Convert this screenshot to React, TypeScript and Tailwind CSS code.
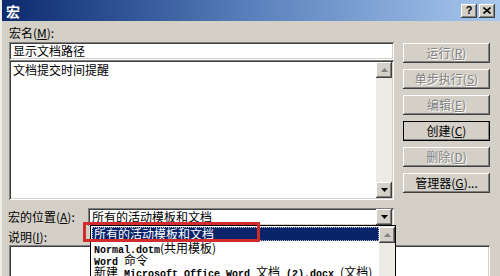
import React from "react"

const raised =
  "bg-[#d4d0c8] shadow-[inset_-1px_-1px_#404040,inset_1px_1px_#ffffff,inset_-2px_-2px_#808080,inset_2px_2px_#d4d0c8]"
const sunken =
  "bg-white shadow-[inset_1px_1px_#808080,inset_-1px_-1px_#ffffff,inset_2px_2px_#404040,inset_-2px_-2px_#d4d0c8]"
const cjk = "font-['Noto_Sans_CJK_SC','Noto_Sans_CJK_JP',sans-serif]"
const mono = "font-['Liberation_Mono','Noto_Sans_CJK_SC',monospace]"
const cjkIn = `${cjk} text-[12px] leading-[12px]`

function Arrow({ up }: { up?: boolean }) {
  return (
    <div className={`${raised} w-[16px] h-[16px] flex items-center justify-center shrink-0`}>
      <svg width="7" height="4" viewBox="0 0 7 4">
        <path d={up ? "M3.5 0 L7 4 L0 4 Z" : "M0 0 L7 0 L3.5 4 Z"} fill={up ? "#808080" : "#000"} />
      </svg>
    </div>
  )
}

function Btn({ label, hot, rest, disabled, def }: { label: string; hot: string; rest?: string; disabled?: boolean; def?: boolean }) {
  return (
    <div
      className={`${raised} h-[20px] w-full flex items-center justify-center text-[12px] leading-none ${
        def ? "outline outline-1 outline-black -outline-offset-1" : ""
      } ${disabled ? "text-[#808080] [text-shadow:1px_1px_0_#ffffff]" : "text-black"}`}
    >
      <span>
        {label}(<span className="underline">{hot}</span>){rest}
      </span>
    </div>
  )
}

export default function App() {
  return (
    <div className={`${cjk} relative w-[500px] h-[276px] overflow-hidden bg-[#d4d0c8] border-l-[2px] border-[#eeece6] text-[12px] text-black`}>
      {/* Title bar */}
      <div className="h-[21px] flex items-center justify-between pl-[4px] pr-[5px] bg-gradient-to-r from-[#0c2a6e] via-[#5a80bc] to-[#a8c8ee]">
        <span className="text-white font-bold text-[14px] leading-none">宏</span>
        <div className="flex gap-[2px]">
          <div className={`${raised} w-[16px] h-[14px] flex items-center justify-center text-[11px] font-bold leading-none font-['Liberation_Sans',sans-serif]`}>?</div>
          <div className={`${raised} w-[16px] h-[14px] flex items-center justify-center`}>
            <svg width="8" height="7" viewBox="0 0 8 7">
              <path d="M0.5 0.5 L7.5 6.5 M7.5 0.5 L0.5 6.5" stroke="#000" strokeWidth="1.6" />
            </svg>
          </div>
        </div>
      </div>

      {/* Main */}
      <div className="flex pl-[7px]">
        <div className="w-[385px] flex flex-col">
          <div className="h-[21px] flex items-center pt-[3px]">
            宏名(<span className="underline">M</span>):
          </div>
          <div className={`${sunken} h-[18px] flex items-center pl-[4px] leading-none`}>显示文档路径</div>
          <div className={`${sunken} h-[140px] flex p-[2px]`}>
            <div className="flex-1 pl-[2px] leading-[16px]">文档提交时间提醒</div>
            <div className="w-[16px] flex flex-col justify-between bg-[#ecebe6]">
              <Arrow up />
              <Arrow />
            </div>
          </div>
        </div>
        <div className="w-[87px] ml-[9px] pt-[22px] flex flex-col gap-[6px]">
          <Btn label="运行" hot="R" disabled />
          <Btn label="单步执行" hot="S" disabled />
          <Btn label="编辑" hot="E" disabled />
          <Btn label="创建" hot="C" def />
          <Btn label="删除" hot="D" disabled />
          <Btn label="管理器" hot="G" rest="..." />
        </div>
      </div>

      {/* Bottom */}
      <div className="pl-[6px] pt-[8px]">
        <div className="flex items-center h-[18px]">
          <div className="w-[80px]">
            宏的位置(<span className="underline">A</span>):
          </div>
          <div className={`${sunken} w-[306px] h-[18px] flex items-center p-[2px]`}>
            <div className="flex-1 pl-[2px] leading-none">所有的活动模板和文档</div>
            <Arrow />
          </div>
        </div>
        <div className="h-[19px] flex items-center pt-[2px]">
          说明(<span className="underline">I</span>):
        </div>
        <div className={`${sunken} ml-[1px] w-[481px] h-[40px]`} />
      </div>

      {/* Open dropdown */}
      <div className="absolute left-[88px] top-[225px] w-[306px] h-[60px] bg-white border border-black flex overflow-hidden">
        <div className={`flex-1 min-w-0 overflow-hidden ${mono} text-[10px] font-bold`}>
          <div className={`${cjk} font-normal text-[12px] h-[14px] mt-[1px] ml-[1px] bg-[#0a246a] text-white leading-[14px] pl-[2px] outline-dotted outline-1 outline-[#c0c0c0] -outline-offset-1`}>
            所有的活动模板和文档
          </div>
          <div className="pl-[3px] h-[12px] leading-[12px] mt-[1px] whitespace-nowrap">
            Normal.dotm<span className={`${cjkIn} font-normal`}>(共用模板)</span>
          </div>
          <div className="pl-[3px] h-[12px] leading-[12px] whitespace-nowrap">
            Word <span className={`${cjkIn} font-normal`}>命令</span>
          </div>
          <div className="pl-[3px] h-[12px] leading-[12px] whitespace-nowrap">
            <span className={`${cjkIn} font-normal`}>新建</span> Microsoft Office Word <span className={`${cjkIn} font-normal`}>文档</span> (2).docx <span className={`${cjkIn} font-normal`}>(文档)</span>
          </div>
        </div>
        <div className="w-[16px] shrink-0 bg-[#ecebe6] pt-[1px]">
          <Arrow up />
        </div>
      </div>

      {/* Highlight annotation */}
      <div className="absolute left-[81px] top-[222px] w-[177px] h-[20px] border-[3px] border-[#d22b2b]" />
    </div>
  )
}
